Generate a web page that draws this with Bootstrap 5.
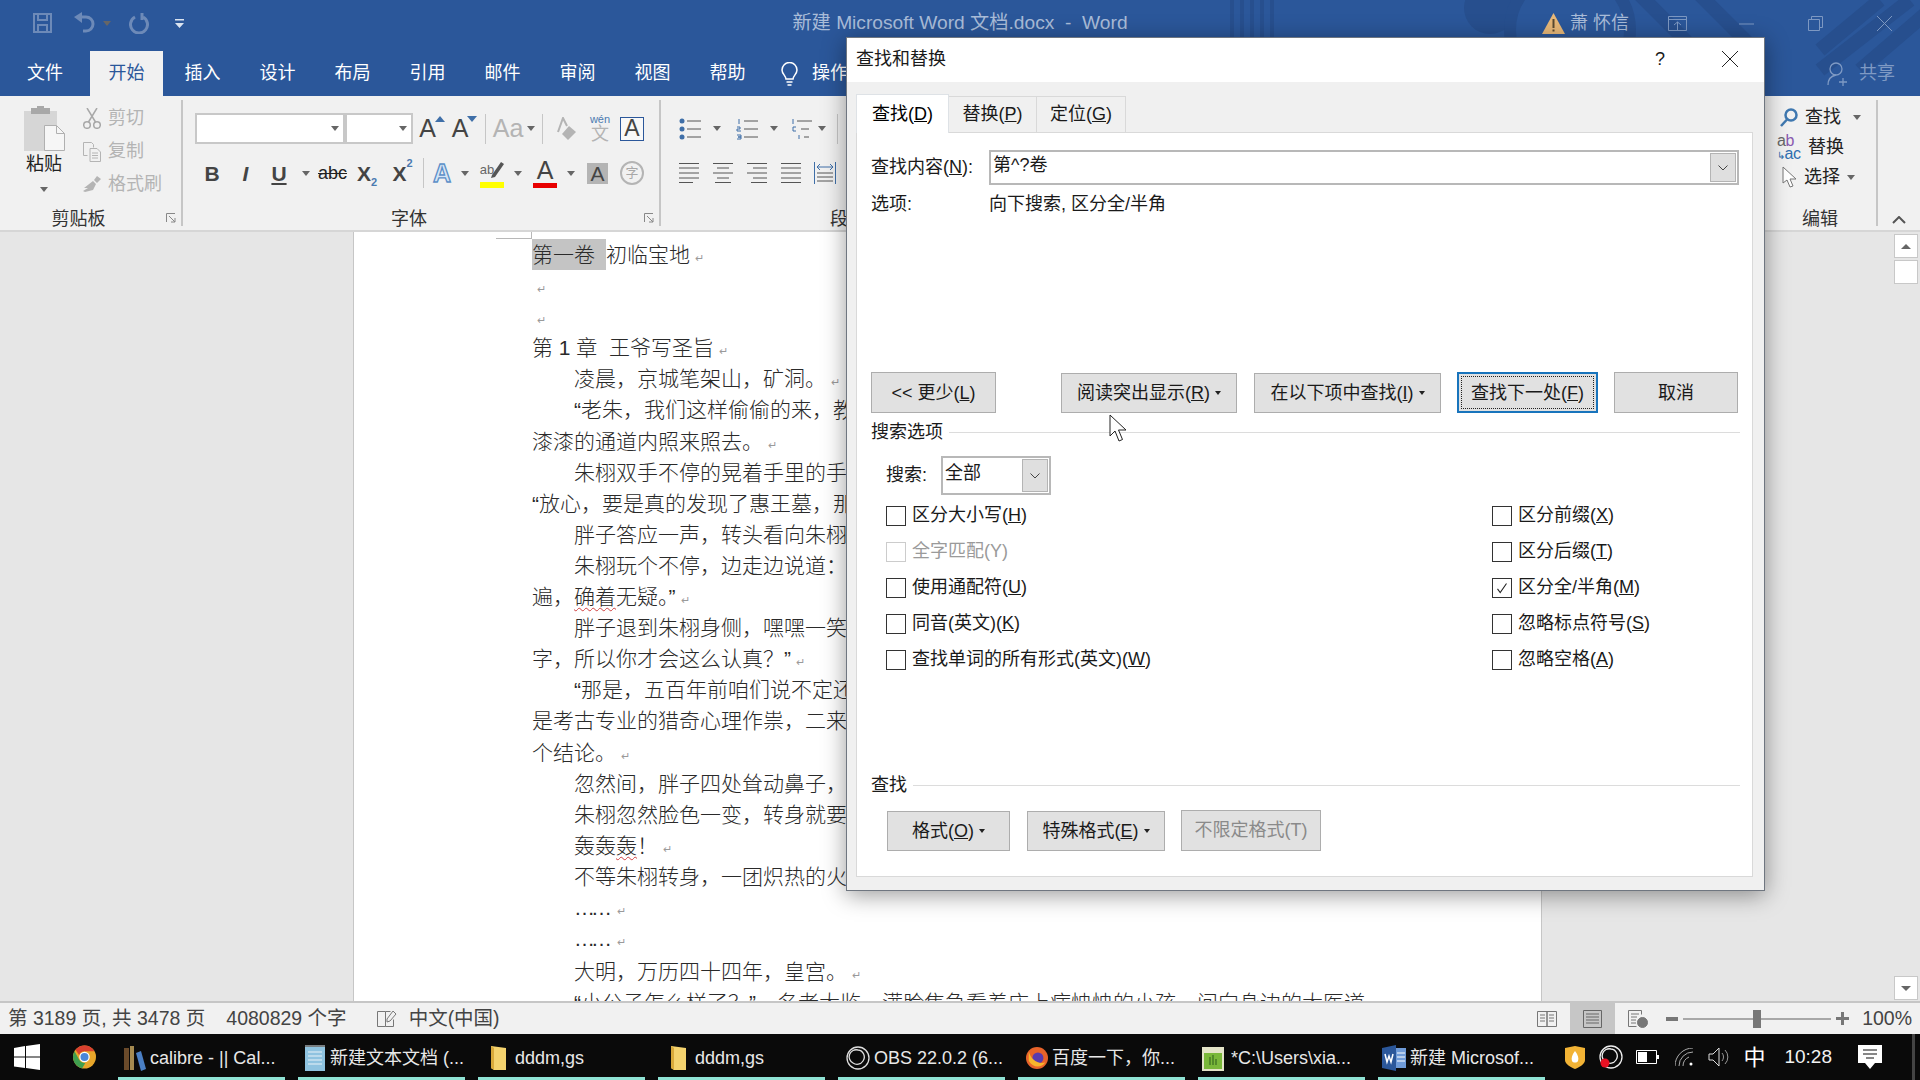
<!DOCTYPE html>
<html lang="zh-CN">
<head>
<meta charset="utf-8">
<title>新建 Microsoft Word 文档.docx - Word</title>
<link href="https://cdn.jsdelivr.net/npm/bootstrap@5.3.0/dist/css/bootstrap.min.css" rel="stylesheet">
<style>
html,body{height:1080px;overflow:hidden}
body{width:1920px;position:relative;font-family:"Liberation Sans","Noto Sans CJK SC",sans-serif;font-size:18px;color:#222;background:#e6e6e6}
svg{display:block;flex:none}
.fx{display:flex;align-items:center}
.ic{display:flex;align-items:center;justify-content:center;flex:none;height:100%}
.hdr{height:96px;background:#2b579a;position:relative;overflow:hidden}
.deco{position:absolute;left:0;top:0}
.tbar{display:grid;grid-template-columns:1fr auto 1fr;height:51px;padding-bottom:5px;align-items:center;position:relative;color:#a9bcd8}
.wtitle{font-size:19.200px}
.tabs{height:45px;display:flex;position:relative;color:#fff}
.rtab{width:75px;display:flex;align-items:center;justify-content:center;padding-bottom:1px;flex:none}
.rtab.file{width:90px;margin-right:0}
.rtab.on{background:#f1f1f1;color:#2b579a;width:73px;margin-right:2px}
.share{color:#7f9ac4;margin-left:auto;padding-right:25px;gap:12px}
.tell{margin-left:16px;gap:14px}
.ribbon{height:136px;background:#f1f1f1;border-bottom:2px solid #d6d6d6;display:flex}
.grp{position:relative;margin:4px 0;flex:none}
.sepr{border-right:2px solid #c6c6c6}
.g1{width:183px}.g2{width:478px;padding-left:12px}.g3{flex:1 1 auto;min-width:0;padding-left:18px}.g4{width:114px;padding-left:13px}
.glab{position:absolute;left:0;right:0;bottom:-6px;height:25px;display:flex;align-items:center;justify-content:center;color:#333}
.g1 .glab,.g2 .glab{padding-right:24px}
.g3 .glab{justify-content:flex-start;padding-left:169px}
.launch{position:absolute;right:5px;bottom:3px}
.grey{color:#b4b4b4}
.drop{width:0;height:0;border-left:4px solid transparent;border-right:4px solid transparent;border-top:5px solid #666;flex:none}
.cbox{height:31px;background:#fff;border:2px solid #c8c8c8;flex:none;display:flex;align-items:center;justify-content:flex-end;padding-right:4px}
.vs{width:1px;height:30px;background:#c6c6c6;flex:none}
.la{font-size:25px;line-height:1;color:#444}
.la.grey{color:#b4b4b4}
.la.glow{color:#d6e5f5;-webkit-text-stroke:1.300px #5b8fc7;font-weight:700}
.tri-up,.tri-dn{width:0;height:0;flex:none;border-left:5px solid transparent;border-right:5px solid transparent;align-self:flex-start;margin-top:3px;margin-left:-1px}
.tri-up{border-bottom:6px solid #3f6fa8}
.tri-dn{border-top:6px solid #3f6fa8}
.r1{height:31px;margin-top:13px}.r2{height:30px;margin-top:14px}
.boxa{width:24px;height:24px;border:1px solid #2b579a;background:#f8f8f8;font-size:23px;line-height:1;display:flex;align-items:center;justify-content:center;color:#444}
.bold{font-weight:700;color:#444;font-size:21px;line-height:1}
.sub{font-size:11px;color:#4a7ab0;line-height:1}
.abw{font-size:13px;color:#666;line-height:1;margin-right:-7px}
.bara{position:relative;width:24px;height:30px;display:flex;flex-direction:column;align-items:center}
.bar-y{width:24px;height:6px;background:#ffff00;margin-top:auto}
.bar-r{width:24px;height:6px;background:#e80000;margin-top:auto}
.gbox{width:21px;height:21px;background:#b4b4b4;color:#444;font-size:21px;line-height:1;display:flex;align-items:center;justify-content:center}
.cir{width:24px;height:24px;border:2px solid #b4b4b4;border-radius:50%;color:#a8a8a8;font-size:13px;display:flex;align-items:center;justify-content:center}
.abac{width:24px;font-size:16px;line-height:.82;color:#2f6fb0;white-space:nowrap;letter-spacing:-.5px}
.abac b{font-weight:400;color:#666}
.abac em{font-style:normal;color:#8a5ab0}
.abac s{text-decoration:none;font-size:10px}
.doc{height:769px;display:flex;background:#e6e6e6}
.gutl{width:353px;flex:none}
.page{width:1189px;flex:none;background:#fff;border-left:1px solid #c6c6c6;border-right:1px solid #c6c6c6;overflow:hidden;font-family:"Liberation Sans","Noto Sans CJK SC",sans-serif;font-weight:300;font-size:21px;color:#2a2a2a}
.crop{height:7px;width:36px;margin-left:142px;border-bottom:1px solid #b8b8b8;border-right:1px solid #b8b8b8}
.ln{height:31.100px;line-height:31px;padding-left:178px;white-space:nowrap}
.ln.in{padding-left:220px}
.ln.lo{margin-top:2px}
.el{letter-spacing:-4px;margin-right:4px}
.pm{color:#9a9a9a;font-size:11px;margin-left:5px;font-family:"DejaVu Sans",sans-serif}
.hl{background:#c4c4c4;display:inline-block;width:74px;height:31px}
.sq{text-decoration:underline wavy #d04040 1px;text-underline-offset:3px}
.gutr{flex:1 1 auto}
.sbar{width:27px;flex:none;padding:2px 2px 1px 1px;display:flex;flex-direction:column;gap:2px}
.sbtn{height:24px;background:#fff;border:1px solid #c8c8c8;display:flex;align-items:center;justify-content:center}
.up{width:0;height:0;border-left:5px solid transparent;border-right:5px solid transparent;border-bottom:5px solid #666}
.dn{width:0;height:0;border-left:5px solid transparent;border-right:5px solid transparent;border-top:5px solid #666}
.status{height:33px;background:#f1f1f1;border-top:2px solid #c6c6c6;display:flex;align-items:center;color:#444;font-size:19.500px;padding-left:8px}
.status .on2{background:#c6c6c6;width:45px;height:100%;display:flex;align-items:center;justify-content:center;margin-left:13px;margin-right:13px}
.slider{width:148px;height:2px;background:#a8a8a8;position:relative;margin:0 5px}
.thumb{position:absolute;left:70px;top:-8px;width:8px;height:18px;background:#777}
.task{height:46px;background:#0a0a0a;display:flex;align-items:center;color:#e8e8e8;font-size:18px}
.ti{width:167px;height:46px;margin-right:13px;border-bottom:3px solid #8fe3d4;display:flex;align-items:center;gap:4px;padding-left:6px;padding-top:5px;flex:none;white-space:nowrap;overflow:hidden}
.ti svg{flex:none}
.tray{margin-left:19px;gap:0;height:100%}
.dlg{position:absolute;left:846px;top:37px;width:919px;background:#f0f0f0;border:1px solid #6f7680;box-shadow:0 4px 22px rgba(0,0,0,.4);padding:0 11px 13px 9px;color:#1a1a1a}
.dtitle{height:44px;background:#fff;margin:0 -11px 0 -9px;padding:0 26px 2px 9px;display:flex;align-items:center}
.dtabs{--bs-nav-tabs-border-width:0;--bs-nav-tabs-border-radius:0;margin-top:12px;height:38px;align-items:flex-end;flex-wrap:nowrap;border:0}
.dtabs .nav-link{height:36px;border:1px solid #d9d9d9;border-bottom:0;border-left:0;background:#f0f0f0;color:#1a1a1a;padding:0;display:flex;align-items:center;justify-content:center;margin:0}
.dtabs .t1{width:93px;height:39px;background:#fff;border-left:1px solid #d9d9d9;position:relative;z-index:1;margin-bottom:-1px}
.dtabs .t2{width:88px}.dtabs .t3{width:89px}
.panel{height:745px;background:#fff;border:1px solid #d9d9d9;padding:17px 13px 0 14px}
.combo{height:35px;border:2px solid #b8b8b8;background:#fff;display:flex;align-items:center;justify-content:space-between;padding:1px}
.combo .val{padding-left:1px;padding-bottom:4px}
.cbtn{width:26px;height:100%;background:#dfdfdf;border:1px solid #b4b4b4;display:flex;align-items:center;justify-content:center}
.dbtn{--bs-btn-padding-x:0;--bs-btn-padding-y:0;--bs-btn-font-size:18px;--bs-btn-line-height:1;--bs-btn-color:#1a1a1a;--bs-btn-bg:#e1e1e1;--bs-btn-border-color:#adadad;--bs-btn-border-radius:0;--bs-btn-disabled-opacity:1;--bs-btn-disabled-bg:#e1e1e1;--bs-btn-disabled-color:#8a8a8a;--bs-btn-disabled-border-color:#adadad;display:flex;align-items:center;justify-content:center;gap:5px;flex:none}
.dbtn.focusd{border:2px solid #1874bc;outline:1px dotted #222;outline-offset:-5px}
.caret2{width:0;height:0;border-left:3.500px solid transparent;border-right:3.500px solid transparent;border-top:4px solid #222}
.leg{height:22px;display:flex;align-items:center;gap:6px}
.leg i{display:block;flex:1 1 auto;height:1px;background:#dcdcdc;margin-right:-1px}
.chk{height:35.900px;display:flex;align-items:center;gap:6px}
.chk .form-check-input{width:20px;height:20px;margin:0;border:1px solid #333;border-radius:0;flex:none;background-color:#fff;opacity:1;box-shadow:none}
.chk .form-check-input:checked{background-color:#fff;border-color:#333;background-image:url("data:image/svg+xml,%3csvg xmlns='http://www.w3.org/2000/svg' viewBox='0 0 20 20'%3e%3cpath fill='none' stroke='%23222' stroke-width='1.2' d='M5 11l3 4 7-10'/%3e%3c/svg%3e")}
.chk .form-check-input:disabled{border-color:#ccc;opacity:1}
.chk.off{color:#9a9a9a}
.cols{display:flex;margin-top:3px;padding-left:15px}
.cola{width:606px;flex:none}
.mouse{position:absolute;left:1109px;top:414px}
/* spacing */
.c6{width:6px}.c8{width:8px}.c5{width:5px}.c10{width:10px}.c20{width:20px}.c21{width:21px}.c23{width:23px}.c24{width:24px}.c32{width:32px}.c33{width:33px}.c34{width:34px}.c35{width:35px}.c36{width:36px}.c42{width:42px}.c44{width:44px}.c46{width:46px}.c56{width:56px}.c60{width:60px}.c68{width:68px}.c72{width:72px}.c150{width:150px}
.ml3{margin-left:3px}.ml5{margin-left:5px}.ml6{margin-left:6px}.ml7{margin-left:7px}.ml8{margin-left:8px}.ml11{margin-left:11px}.ml12{margin-left:12px}.ml13{margin-left:13px}.ml14{margin-left:14px}.ml15{margin-left:15px}.ml16{margin-left:16px}.ml17{margin-left:17px}.ml18{margin-left:18px}.ml19{margin-left:19px}.ml21{margin-left:21px}.ml22{margin-left:22px}.ml26{margin-left:26px}.ml30{margin-left:30px}.ml33{margin-left:33px}.ml38{margin-left:38px}.ml45{margin-left:45px}.ml52{margin-left:52px}.ml54{margin-left:54px}.ml65{margin-left:65px}
.mr28{margin-right:28px}
.col-paste{width:72px;margin-left:8px;padding-top:6px;display:flex;flex-direction:column;align-items:center}
.col-cut{margin-left:3px;padding-top:2px}
.cutrow{height:33px;gap:7px}
.b125{width:125px;height:41px}.b176{width:176px;height:40px;margin-top:1px}.b187{width:187px;height:40px;margin-top:1px}.b141{width:141px;height:41px}.b124{width:124px;height:41px}
.b123{width:123px;height:40px;margin-top:1px}.b138{width:138px;height:40px;margin-top:1px}.b140{width:140px;height:41px}
.w118{width:118px;flex:none}
.h26{height:26px}.mt6{margin-top:6px}.mt8{margin-top:8px}.mt9{margin-top:9px}.mt12{margin-top:12px}.mt13{margin-top:13px}.mt97{margin-top:97.500px}.mt155{margin-top:155px}
.search{height:39px;padding-left:15px}
.leg.up1{margin-top:8px}
.w55{width:55px;flex:none}.w110{width:110px;flex:none;height:39px}
.fmt{padding-left:16px}
.e-row{height:30px;gap:7px}
.edit-col{padding-top:2px}
.chev{width:42px;flex:none;display:flex;justify-content:center;align-items:flex-end;padding-bottom:6px}
.tr-ml{margin-left:auto}
.cn{font-size:22px;color:#fff}
.clock{color:#f2f2f2;font-size:19px}
.sep-t{width:3px;height:46px;background:#444;margin-left:30px}
</style>
</head>
<body>
<header class="hdr">
  <svg class="deco" width="1920" height="96" fill="none" stroke="#274f8e">
    <path stroke-width="4" d="M1232 0v40M1242 0v40M1252 0v40M1262 0v40M1272 0v40"/>
    <circle cx="1490" cy="8" r="26" fill="#274f8e" stroke="none"/>
    <circle cx="1570" cy="30" r="60" stroke-width="12"/>
    <path stroke-width="14" d="M1640-5l90 90M1700-5l60 60M1910 0l-90 70M1880 0l-60 50M1930 10l-70 60"/>
  </svg>
  <div class="tbar">
    <div class="fx">
      <svg class="ml33" width="19" height="20" viewBox="0 0 19 20" fill="none" stroke="#6d8ab8" stroke-width="2"><path d="M1 1h17v18H1zM5 1v6h9V1M5 19v-7h9v7"/></svg>
      <svg class="ml21" width="22" height="22" viewBox="0 0 22 22" fill="none" stroke="#6d8ab8" stroke-width="3"><path d="M8 5h5a7 7 0 0 1 0 14h-3"/><path fill="#6d8ab8" stroke="none" d="M9 0v11L1 5z"/></svg>
      <span class="drop ml8"></span>
      <svg class="ml18" width="20" height="22" viewBox="0 0 20 22" fill="none" stroke="#6d8ab8" stroke-width="3"><path d="M6 5a8.500 8.500 0 1 0 8 0"/><path d="M13 1v7"/></svg>
      <svg class="ml26" width="9" height="9" viewBox="0 0 9 9" fill="#dbe4f0"><path d="M0 0h9v1.500H0zM0 4h9L4.500 9z"/></svg>
    </div>
    <div class="wtitle">新建 Microsoft Word 文档.docx&nbsp; - &nbsp;Word</div>
    <div class="fx justify-content-end">
      <svg width="23" height="21" viewBox="0 0 23 21"><path fill="#e8b878" d="M11.500 0L23 21H0z"/><path fill="#5a4a30" d="M10.500 6h2v9h-2zM10.500 16.500h2v2h-2z"/></svg>
      <span class="ml5 c60 text-nowrap">萧 怀信</span>
      <svg class="ml38" width="19" height="15" viewBox="0 0 19 15" fill="none" stroke="#7d98c2"><path d="M.5.500h18v14H.5zM.5 3.500h18M9.500 14V6M6 9l3.500-3 3.500 3"/></svg>
      <svg class="ml52" width="15" height="15" viewBox="0 0 15 15" stroke="#7d98c2" fill="none"><path d="M0 8h15"/></svg>
      <svg class="ml54" width="15" height="15" viewBox="0 0 15 15" stroke="#7d98c2" fill="none"><path d="M.5 3.500h11v11H.5zM3.500 3.500v-3h11v11h-3"/></svg>
      <svg class="ml54 mr28" width="15" height="15" viewBox="0 0 15 15" stroke="#7d98c2" fill="none"><path d="M0 0l15 15M15 0L0 15"/></svg>
    </div>
  </div>
  <nav class="tabs">
    <div class="rtab file">文件</div>
    <div class="rtab on">开始</div>
    <div class="rtab">插入</div>
    <div class="rtab">设计</div>
    <div class="rtab">布局</div>
    <div class="rtab">引用</div>
    <div class="rtab">邮件</div>
    <div class="rtab">审阅</div>
    <div class="rtab">视图</div>
    <div class="rtab">帮助</div>
    <div class="fx tell">
      <svg width="17" height="24" viewBox="0 0 17 24" fill="none" stroke="#fff" stroke-width="1.500"><path d="M5 17c0-3-4-5-4-9a7.500 7.500 0 0 1 15 0c0 4-4 6-4 9zM5.500 20h6M6.500 23h4"/></svg>
      <span>操作说明搜索</span>
    </div>
    <div class="fx share">
      <svg width="20" height="24" viewBox="0 0 20 24" fill="none" stroke="#7f9ac4" stroke-width="1.300"><circle cx="9" cy="7" r="6"/><path d="M1 23c0-5 3-9 8-10M12 20h8M16 16v8"/></svg>
      <span>共享</span>
    </div>
  </nav>
</header>

<section class="ribbon">
  <div class="grp g1 sepr">
    <div class="d-flex">
      <div class="col-paste">
        <svg width="41" height="45" viewBox="0 0 41 45"><path fill="#d6d6d6" d="M0 5h33v40H0z"/><path fill="#a8a8a8" d="M7 2h19v6H7zM13 0h7v4h-7z"/><path fill="#f6f6f6" stroke="#b0b0b0" d="M20.500 19.500h12l8 8v17h-20z"/><path fill="none" stroke="#b0b0b0" d="M32.500 19.500v8h8"/></svg>
        <div>粘贴</div>
        <span class="drop mt9"></span>
      </div>
      <div class="col-cut grey">
        <div class="fx cutrow">
          <svg width="18" height="21" viewBox="0 0 18 21" fill="none" stroke="#a8a8a8" stroke-width="1.500"><circle cx="4" cy="17" r="3.300"/><circle cx="14" cy="17" r="3.300"/><path d="M5.500 14L14 0M12.500 14L4 0"/></svg>
          <span>剪切</span>
        </div>
        <div class="fx cutrow">
          <svg width="18" height="20" viewBox="0 0 18 20" fill="none" stroke="#b4b4b4"><path d="M.5.500h8l2 2v3M.5.500v13h4M7 6.500h7l3.500 3.500v9.500H7zM9 11h6M9 13.500h6M9 16h6"/></svg>
          <span>复制</span>
        </div>
        <div class="fx cutrow">
          <svg width="18" height="18" viewBox="0 0 18 18" fill="#b4b4b4"><path d="M11 4l3-4 4 3-4 4zM10 5l3 3-3 6-8 2-2-1 5-3-4 0z"/></svg>
          <span>格式刷</span>
        </div>
      </div>
    </div>
    <div class="glab">剪贴板</div>
    <svg class="launch" width="10" height="10" viewBox="0 0 10 10" fill="none" stroke="#888"><path d="M.5 9V.5H9M3 3l6 6M9 5v4H5"/></svg>
  </div>

  <div class="grp g2 sepr">
    <div class="fx r1">
      <div class="cbox c150"><span class="drop"></span></div>
      <div class="cbox c68"><span class="drop"></span></div>
      <div class="ic c32"><span class="la ml6">A</span><span class="tri-up"></span></div>
      <div class="ic c33"><span class="la ml6">A</span><span class="tri-dn"></span></div>
      <span class="vs ml7"></span>
      <div class="ic c56 gap-1"><span class="la grey">Aa</span><span class="drop"></span></div>
      <span class="vs"></span>
      <div class="ic c42 ml3">
        <svg width="20" height="24" viewBox="0 0 20 24"><path fill="none" stroke="#b4b4b4" stroke-width="2" d="M1 15L6 1l4 8"/><path fill="#b4b4b4" d="M12 9l7 6-8 8-6-6z"/></svg>
      </div>
      <div class="ic c24 flex-column grey lh-1"><small class="sub grey">wén</small><span>文</span></div>
      <div class="boxa ml8">A</div>
    </div>
    <div class="fx r2">
      <div class="ic c34 bold">B</div>
      <div class="ic c33 bold fst-italic">I</div>
      <div class="ic c34 bold text-decoration-underline">U</div>
      <div class="ic c20"><span class="drop"></span></div>
      <div class="ic c33"><span class="text-decoration-line-through">abc</span></div>
      <div class="ic c36 bold">X<span class="sub align-self-end">2</span></div>
      <div class="ic c35 bold">X<span class="sub align-self-start">2</span></div>
      <span class="vs ml3"></span>
      <div class="ic c36"><span class="la glow">A</span></div>
      <div class="ic c10"><span class="drop"></span></div>
      <div class="ic c44">
        <div class="bara">
          <div class="fx">
            <span class="abw">ab</span>
            <svg width="17" height="22" viewBox="0 0 17 22"><path fill="#555" d="M5 17L14 4l3 2-9 13-4 1z"/></svg>
          </div>
          <span class="bar-y"></span>
        </div>
      </div>
      <div class="ic c8"><span class="drop"></span></div>
      <div class="ic c46">
        <div class="bara"><span class="la">A</span><span class="bar-r"></span></div>
      </div>
      <div class="ic c6"><span class="drop"></span></div>
      <div class="gbox ml13">A</div>
      <div class="cir ml12">字</div>
    </div>
    <div class="glab">字体</div>
    <svg class="launch" width="10" height="10" viewBox="0 0 10 10" fill="none" stroke="#888"><path d="M.5 9V.5H9M3 3l6 6M9 5v4H5"/></svg>
  </div>

  <div class="grp g3">
    <div class="fx r1">
      <svg width="22" height="22" viewBox="0 0 22 22"><g fill="#3f6fa8"><circle cx="3" cy="3" r="2.500"/><circle cx="3" cy="11" r="2.500"/><circle cx="3" cy="19" r="2.500"/></g><path stroke="#555" d="M8 3h14M8 11h14M8 19h14"/></svg>
      <div class="ic c32"><span class="drop"></span></div>
      <svg class="ml3" width="22" height="22" viewBox="0 0 22 22"><path stroke="#555" d="M8 3h14M8 11h14M8 19h14"/><path stroke="#3f6fa8" fill="none" d="M3 1v5M1 9h3v2H1v2h4M1 17h4v2H2h3v2H1"/></svg>
      <div class="ic c32"><span class="drop"></span></div>
      <svg width="22" height="22" viewBox="0 0 22 22"><path stroke="#555" d="M7 3h15M11 11h8M14 19h5"/><path stroke="#3f6fa8" fill="none" d="M3 1v5M6 9H3v4h3M9 17v4"/></svg>
      <div class="ic c20"><span class="drop"></span></div>
      <span class="vs ml5"></span>
    </div>
    <div class="fx r2">
      <svg width="20" height="22" viewBox="0 0 20 22" stroke="#555"><path d="M0 1.500h20M0 6h20M0 11h20M0 16h20M0 20.500h14"/></svg>
      <svg class="ml14" width="20" height="22" viewBox="0 0 20 22" stroke="#555"><path d="M0 1.500h20M4 6h12M0 11h20M4 16h12M2 20.500h16"/></svg>
      <svg class="ml14" width="20" height="22" viewBox="0 0 20 22" stroke="#555"><path d="M0 1.500h20M6 6h14M0 11h20M6 16h14M4 20.500h16"/></svg>
      <svg class="ml14" width="20" height="22" viewBox="0 0 20 22" stroke="#555"><path d="M0 1.500h20M0 6h20M0 11h20M0 16h20M0 20.500h20"/></svg>
      <svg class="ml13" width="22" height="22" viewBox="0 0 22 22" fill="none"><path stroke="#3f6fa8" d="M.5 0v22M21.500 0v22M3 5h16M6 2L3 5l3 3M16 2l3 3-3 3"/><path stroke="#555" d="M3 11h16M3 15h16M3 19h16"/></svg>
    </div>
    <div class="glab">段落</div>
  </div>

  <div class="grp g4 sepr edit-col">
    <div class="fx e-row">
      <svg class="ml3" width="18" height="19" viewBox="0 0 18 19" fill="none" stroke="#3f78b0" stroke-width="2.500"><circle cx="11" cy="7" r="5.500"/><path d="M7 11.500L1 18"/></svg>
      <span>查找</span>
      <span class="drop ml5"></span>
    </div>
    <div class="fx e-row">
      <div class="abac"><div><b>a</b><em>b</em></div><div><s>↳</s>ac</div></div>
      <span>替换</span>
    </div>
    <div class="fx e-row">
      <svg class="ml5" width="15" height="22" viewBox="0 0 15 22" fill="#fff" stroke="#777"><path d="M1 1v16l4-3 3 7 3-1-3-7h6z"/></svg>
      <span>选择</span>
      <span class="drop"></span>
    </div>
    <div class="glab">编辑</div>
  </div>
  <div class="chev">
    <svg width="14" height="8" viewBox="0 0 14 8" fill="none" stroke="#555" stroke-width="2"><path d="M1 7l6-6 6 6"/></svg>
  </div>
</section>

<main class="doc">
  <div class="gutl"></div>
  <article class="page">
    <div class="crop"></div>
    <div class="ln"><span class="hl">第一卷</span>初临宝地<span class="pm">↵</span></div>
    <div class="ln"><span class="pm">↵</span></div>
    <div class="ln"><span class="pm">↵</span></div>
    <div class="ln">第 1 章&nbsp; 王爷写圣旨<span class="pm">↵</span></div>
    <div class="ln in">凌晨，京城笔架山，矿洞。<span class="pm">↵</span></div>
    <div class="ln in">“老朱，我们这样偷偷的来，教</div>
    <div class="ln">漆漆的通道内照来照去。<span class="pm">↵</span></div>
    <div class="ln in">朱栩双手不停的晃着手里的手</div>
    <div class="ln">“放心，要是真的发现了惠王墓，那</div>
    <div class="ln in">胖子答应一声，转头看向朱栩</div>
    <div class="ln in">朱栩玩个不停，边走边说道：“</div>
    <div class="ln">遍，<span class="sq">确着</span>无疑。”<span class="pm">↵</span></div>
    <div class="ln in">胖子退到朱栩身侧，嘿嘿一笑</div>
    <div class="ln">字，所以你才会这么认真？”<span class="pm">↵</span></div>
    <div class="ln in">“那是，五百年前咱们说不定还</div>
    <div class="ln">是考古专业的猎奇心理作祟，二来</div>
    <div class="ln">个结论。<span class="pm">↵</span></div>
    <div class="ln in">忽然间，胖子四处耸动鼻子，</div>
    <div class="ln in">朱栩忽然脸色一变，转身就要</div>
    <div class="ln in">轰轰<span class="sq">轰</span>！<span class="pm">↵</span></div>
    <div class="ln in">不等朱栩转身，一团炽热的火</div>
    <div class="ln in"><span class="el">……</span><span class="pm">↵</span></div>
    <div class="ln in"><span class="el">……</span><span class="pm">↵</span></div>
    <div class="ln in lo">大明，万历四十四年，皇宫。<span class="pm">↵</span></div>
    <div class="ln in">“小公子怎么样了？”一名老太监，满脸焦急看着床上病怏怏的小孩，问向身边的太医道</div>
  </article>
  <div class="gutr"></div>
  <div class="sbar">
    <div class="sbtn"><span class="up"></span></div>
    <div class="sbtn"></div>
    <div class="flex-grow-1"></div>
    <div class="sbtn"><span class="dn"></span></div>
  </div>
</main>

<footer class="status">
  <span>第 3189 页, 共 3478 页</span>
  <span class="ml21">4080829 个字</span>
  <svg class="ml30" width="20" height="18" viewBox="0 0 20 18" fill="none" stroke="#777"><path d="M.5 1.500h8v15h-8zM8.500 1.500h5M8.500 16.500h8v-7M16 1l3 3-6 7-3 1 0-3z"/></svg>
  <span class="ml12">中文(中国)</span>
  <svg class="ms-auto" width="20" height="18" viewBox="0 0 20 18" fill="none" stroke="#777"><path d="M.5 1.500H10v15H.5zM10 1.500h9.500v15H10zM3 5h5M3 8h5M3 11h5M12 5h5M12 8h5M12 11h5"/></svg>
  <div class="on2"><svg width="19" height="18" viewBox="0 0 19 18" fill="none" stroke="#666"><path d="M.5.500h18v17H.5zM3 4h13M3 7h13M3 10h13M3 13h13"/></svg></div>
  <svg width="20" height="18" viewBox="0 0 20 18" fill="none" stroke="#777"><path d="M.5.500h13v4M.5.500v16h8M3 4h8M3 7h6M3 10h5M3 13h5"/><circle cx="14.500" cy="12.500" r="5" fill="#777"/></svg>
  <svg class="ml18" width="12" height="4" viewBox="0 0 12 4"><path fill="#777" d="M0 0h12v4H0z"/></svg>
  <div class="slider"><span class="thumb"></span></div>
  <svg width="13" height="13" viewBox="0 0 13 13"><path fill="#777" d="M5 0h3v5h5v3H8v5H5V8H0V5h5z"/></svg>
  <span class="ml13 me-2">100%</span>
</footer>

<div class="task">
  <svg class="ml14" width="26" height="26" viewBox="0 0 26 26" fill="#fff"><path d="M0 4l11-2v10.500H0zM12 2l14-2v12.500H12zM0 13.500h11V24L0 22.500zM12 13.500h14V26l-14-2z"/></svg>
  <svg class="ml33" width="23" height="24" viewBox="0 0 24 24"><circle cx="12" cy="12" r="12" fill="#e8a62a"/><path fill="#d9402f" d="M12 0a12 12 0 0 1 10.400 6H12a6 6 0 0 0-5.600 4L2.600 4.500A12 12 0 0 1 12 0z"/><path fill="#3f9f4f" d="M1.600 6l5 9a6 6 0 0 0 6.400 3l-3.400 5.700A12 12 0 0 1 1.600 6z"/><circle cx="12" cy="12" r="5.500" fill="#fff"/><circle cx="12" cy="12" r="4.200" fill="#4a86d8"/></svg>
  <div class="ml22 fx">
    <div class="ti"><svg width="22" height="26" viewBox="0 0 22 26"><path fill="#6a4a2a" d="M0 3h5v22H0z"/><path fill="#a58a50" d="M6 1h4v24H6z"/><path fill="#4a7fc4" d="M12 8l5-2 5 18-5 2z"/></svg><span>calibre - || Cal...</span></div>
    <div class="ti"><svg width="22" height="26" viewBox="0 0 22 26"><path fill="#8fc3e0" d="M1 2h20v24H1z"/><path stroke="#e8f2f8" d="M1 1h20M4 7h14M4 11h14M4 15h14M4 19h14"/></svg><span>新建文本文档 (...</span></div>
    <div class="ti ps-2"><svg class="ml5" width="15" height="26" viewBox="0 0 15 26"><path fill="#f4d26e" d="M0 1l15 2v22H3l-3-2z"/><path fill="#d9a93a" d="M0 1v22l3 2V3z"/></svg><span class="ml5">dddm,gs</span></div>
    <div class="ti ps-2"><svg class="ml5" width="15" height="26" viewBox="0 0 15 26"><path fill="#f4d26e" d="M0 1l15 2v22H3l-3-2z"/><path fill="#d9a93a" d="M0 1v22l3 2V3z"/></svg><span class="ml5">dddm,gs</span></div>
    <div class="ti ps-2"><svg width="24" height="24" viewBox="0 0 24 24" fill="none" stroke="#ddd" stroke-width="1.300"><circle cx="12" cy="12" r="11"/><path d="M7 17a7 7 0 0 1 5-13M12 4a7 7 0 0 1 5 11M17 15a7 7 0 0 1-10 2"/></svg><span>OBS 22.0.2 (6...</span></div>
    <div class="ti ps-2"><svg width="22" height="24" viewBox="0 0 24 24"><circle cx="12" cy="12" r="12" fill="#e8632a"/><circle cx="13" cy="12" r="6" fill="#5a3ab0"/><path fill="#f7b52c" d="M3 5c2 8 9 14 18 12-4 6-14 6-18-2z"/></svg><span>百度一下，你...</span></div>
    <div class="ti ps-1"><svg width="22" height="26" viewBox="0 0 22 26"><path fill="#e4e4c8" d="M0 2h22v24H0z"/><path fill="#7ab83a" d="M2 8h18v16H2z"/><path stroke="#2a5a1a" d="M8 12v8M11 10v10M14 14v6"/></svg><span class="ml3">*C:\Users\xia...</span></div>
    <div class="ti ps-1 me-0"><svg width="24" height="26" viewBox="0 0 24 26"><path fill="#2b579a" d="M0 3l14-3v26L0 23z"/><path fill="#6f9bd8" d="M14 3h10v20H14z"/><path stroke="#fff" d="M15 8h8M15 12h8M15 16h8"/><path fill="none" stroke="#fff" stroke-width="1.500" d="M3 9l2 8 2-6 2 6 2-8"/></svg><span>新建 Microsof...</span></div>
  </div>
  <div class="fx tray tr-ml">
    <svg width="20" height="23" viewBox="0 0 20 23"><path fill="#f2b335" d="M0 2l10-2 10 2v12c0 4-5 7-10 9-5-2-10-5-10-9z"/><path fill="#fff" d="M10 5c3 4 4 7 3 10-1 2-5 2-6 0-1-3 0-6 3-10z"/></svg>
    <svg class="ml14" width="24" height="24" viewBox="0 0 24 24" fill="none" stroke="#eee" stroke-width="1.300"><circle cx="12" cy="12" r="11"/><path d="M7 17a7 7 0 0 1 5-13M12 4a7 7 0 0 1 5 11M17 15a7 7 0 0 1-10 2"/><circle cx="6" cy="18" r="4.500" fill="#e81123" stroke="none"/></svg>
    <svg class="ml13" width="23" height="14" viewBox="0 0 23 14"><path fill="none" stroke="#fff" d="M.5.500h20v13H.5z"/><path fill="#fff" d="M2 2h9v10H2zM21 5h2v4h-2z"/></svg>
    <svg class="ml16" width="18" height="18" viewBox="0 0 18 18" fill="none" stroke="#aaa"><path d="M0 18A18 18 0 0 1 18 0M4 18A14 14 0 0 1 18 4M8 18a10 10 0 0 1 6-9"/><circle cx="16" cy="16" r="1.500" fill="#fff" stroke="none"/></svg>
    <svg class="ml15" width="22" height="20" viewBox="0 0 22 20" fill="none" stroke="#ddd"><path d="M1 7h4l6-6v18l-6-6H1z"/><path stroke="#999" d="M14 6a6 6 0 0 1 0 8M17 3a10 10 0 0 1 0 14"/></svg>
    <span class="cn ml13">中</span>
    <span class="clock ml19">10:28</span>
    <svg class="ml26" width="24" height="24" viewBox="0 0 24 24"><path fill="#fff" d="M0 0h24v18h-7l-5 6-5-6H0z"/><path stroke="#111" stroke-width="1.200" d="M5 5h14M5 9h14M8 13h8"/></svg>
    <span class="sep-t"></span>
    <span class="c5"></span>
  </div>
</div>

<div class="dlg" role="dialog">
  <div class="dtitle">
    <span class="flex-grow-1">查找和替换</span>
    <span class="c34 text-center">?</span>
    <svg class="ml45" width="16" height="16" viewBox="0 0 16 16" stroke="#222" fill="none"><path d="M0 0l16 16M16 0L0 16"/></svg>
  </div>
  <ul class="nav nav-tabs dtabs">
    <li class="nav-item"><a class="nav-link active t1" href="#"><span>查找(<u>D</u>)</span></a></li>
    <li class="nav-item"><a class="nav-link t2" href="#"><span>替换(<u>P</u>)</span></a></li>
    <li class="nav-item"><a class="nav-link t3" href="#"><span>定位(<u>G</u>)</span></a></li>
  </ul>
  <div class="panel">
    <div class="fx">
      <div class="w118">查找内容(<u>N</u>):</div>
      <div class="combo flex-grow-1">
        <span class="val">第^?卷</span>
        <span class="cbtn"><svg width="10" height="6" viewBox="0 0 10 6" fill="none" stroke="#444"><path d="M.5.500L5 5 9.500.500"/></svg></span>
      </div>
    </div>
    <div class="fx mt6 h26">
      <div class="w118">选项:</div>
      <div>向下搜索, 区分全/半角</div>
    </div>
    <div class="d-flex mt155 align-items-start">
      <button class="btn dbtn b125"><span>&lt;&lt; 更少(<u>L</u>)</span></button>
      <button class="btn dbtn b176 ml65"><span>阅读突出显示(<u>R</u>)</span><span class="caret2"></span></button>
      <button class="btn dbtn b187 ml17"><span>在以下项中查找(<u>I</u>)</span><span class="caret2"></span></button>
      <button class="btn dbtn b141 ml16 focusd"><span>查找下一处(<u>F</u>)</span></button>
      <button class="btn dbtn b124 ml16"><span>取消</span></button>
    </div>
    <div class="leg up1"><span>搜索选项</span><i></i></div>
    <div class="fx search mt13">
      <div class="w55">搜索:</div>
      <div class="combo w110">
        <span class="val">全部</span>
        <span class="cbtn"><svg width="10" height="6" viewBox="0 0 10 6" fill="none" stroke="#444"><path d="M.5.500L5 5 9.500.500"/></svg></span>
      </div>
    </div>
    <div class="cols">
      <div class="cola">
        <label class="chk"><input class="form-check-input" type="checkbox"><span>区分大小写(<u>H</u>)</span></label>
        <label class="chk off"><input class="form-check-input" type="checkbox" disabled><span>全字匹配(Y)</span></label>
        <label class="chk"><input class="form-check-input" type="checkbox"><span>使用通配符(<u>U</u>)</span></label>
        <label class="chk"><input class="form-check-input" type="checkbox"><span>同音(英文)(<u>K</u>)</span></label>
        <label class="chk"><input class="form-check-input" type="checkbox"><span>查找单词的所有形式(英文)(<u>W</u>)</span></label>
      </div>
      <div>
        <label class="chk"><input class="form-check-input" type="checkbox"><span>区分前缀(<u>X</u>)</span></label>
        <label class="chk"><input class="form-check-input" type="checkbox"><span>区分后缀(<u>T</u>)</span></label>
        <label class="chk"><input class="form-check-input" type="checkbox" checked><span>区分全/半角(<u>M</u>)</span></label>
        <label class="chk"><input class="form-check-input" type="checkbox"><span>忽略标点符号(<u>S</u>)</span></label>
        <label class="chk"><input class="form-check-input" type="checkbox"><span>忽略空格(<u>A</u>)</span></label>
      </div>
    </div>
    <div class="leg mt97"><span>查找</span><i></i></div>
    <div class="d-flex fmt mt13 align-items-start">
      <button class="btn dbtn b123"><span>格式(<u>O</u>)</span><span class="caret2"></span></button>
      <button class="btn dbtn b138 ml17"><span>特殊格式(<u>E</u>)</span><span class="caret2"></span></button>
      <button class="btn dbtn b140 ml16" disabled><span>不限定格式(T)</span></button>
    </div>
  </div>
</div>
<svg class="mouse" width="20" height="28" viewBox="0 0 20 28" fill="#fff" stroke="#222"><path d="M1 1v21l5-5 4 10 3.500-1.500-4-9.500H17z"/></svg>
</body>
</html>
